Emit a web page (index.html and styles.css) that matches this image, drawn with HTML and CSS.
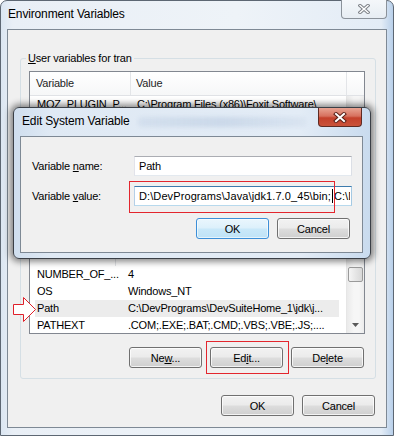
FILE: index.html
```html
<!DOCTYPE html>
<html lang="en">
<head>
    <meta charset="UTF-8">
    <meta name="viewport" content="width=device-width, initial-scale=1.0">
    <title>Environment Variables</title>
    <link rel="stylesheet" href="styles.css">
</head>
<body>
    <div class="window">
        <div class="caption">
            <span class="caption-text">Environment Variables</span>
            <span class="close-btn">
                <svg width="12" height="10" viewBox="0 0 12 10">
                    <path d="M2 1.5 L10 8.5 M10 1.5 L2 8.5" stroke="#7d8187" stroke-width="3.4" stroke-linecap="square"/>
                    <path d="M2 1.5 L10 8.5 M10 1.5 L2 8.5" stroke="#fff" stroke-width="1.4" stroke-linecap="square"/>
                </svg>
            </span>
        </div>

        <div class="client">
            <div class="group">
                <div class="group-label"><u>U</u>ser variables for tran</div>
                <div class="listview">
                    <div class="lv-head">
                        <span class="hcell">Variable</span>
                        <span class="hcell">Value</span>
                        <span class="hcell"></span>
                    </div>
                    <div class="lv-body">
                        <div class="lv-rows">
                            <div class="row user"><span>MOZ_PLUGIN_P...</span><span>C:\Program Files (x86)\Foxit Software\</span></div>
                            <!-- rows hidden behind the edit dialog -->
                            <div class="row user"></div>
                            <div class="row user"></div>
                            <div class="row user"></div>
                            <div class="row user"></div>
                            <div class="row user"></div>
                            <div class="row user"></div>
                            <div class="row user"></div>
                            <div class="row user"></div>
                            <div class="row seam"><span></span><span></span></div>
                            <div class="row sys"><span>NUMBER_OF_...</span><span>4</span></div>
                            <div class="row sys"><span>OS</span><span>Windows_NT</span></div>
                            <div class="row sys selected"><span>Path</span><span>C:\DevPrograms\DevSuiteHome_1\jdk\j...</span></div>
                            <div class="row sys"><span>PATHEXT</span><span>.COM;.EXE;.BAT;.CMD;.VBS;.VBE;.JS;....</span></div>
                        </div>
                        <div class="scrollbar">
                            <div class="thumb"></div>
                            <div class="arrow-down">
                                <svg width="7" height="4" viewBox="0 0 7 4"><path d="M0 0 H7 L3.5 4 Z" fill="#5a5a5a"/></svg>
                            </div>
                        </div>
                    </div>
                </div>
                <div class="btn-row">
                    <button class="btn">Ne<u>w</u>...</button>
                    <button class="btn marked">Ed<u>i</u>t...</button>
                    <button class="btn">De<u>l</u>ete</button>
                </div>
            </div>

            <div class="btn-row dialog-buttons">
                <button class="btn">OK</button>
                <button class="btn">Cancel</button>
            </div>
        </div>
    </div>

    <!-- red pointer to the Path row -->
    <svg class="pointer" width="25" height="27" viewBox="0 0 25 27">
        <path d="M1.5 8.5 H11.5 V1.5 L23.5 13.5 L11.5 25.5 V18.5 H1.5 Z" fill="#fff" stroke="#e0202a" stroke-width="1"/>
    </svg>

    <div class="dialog">
        <div class="caption dlg-caption">
            <span class="caption-text">Edit System Variable</span>
            <span class="ghost"></span>
            <span class="close-btn red">
                <svg width="14" height="11" viewBox="0 0 14 11">
                    <path d="M3 2 L11 9 M11 2 L3 9" stroke="#5b2118" stroke-width="4" stroke-linecap="square"/>
                    <path d="M3 2 L11 9 M11 2 L3 9" stroke="#fff" stroke-width="2" stroke-linecap="square"/>
                </svg>
            </span>
        </div>
        <div class="dlg-client">
            <div class="form-row">
                <label class="form-label">Variable <u>n</u>ame:</label>
                <div class="field">Path</div>
            </div>
            <div class="form-row">
                <label class="form-label">Variable <u>v</u>alue:</label>
                <div class="field focused">
                    <span class="field-text">D:\DevPrograms\Java\jdk1.7.0_45\bin;<span class="caret"></span>C:\D</span>
                </div>
            </div>
            <div class="btn-row dlg-buttons">
                <button class="btn default">OK</button>
                <button class="btn">Cancel</button>
            </div>
        </div>
    </div>
</body>
</html>
```

FILE: styles.css
```css
body {
    margin: 0;
    background: #fff;
    font-family: "Segoe UI", "Liberation Sans", Arial, sans-serif;
    font-size: 11px;
    letter-spacing: -0.2px;
    color: #000;
    position: relative;
    width: 394px;
    height: 436px;
    overflow: hidden;
}
.window {
    box-sizing: border-box;
    width: 394px;
    height: 436px;
    display: flex;
    flex-direction: column;
    padding: 0 6px 7px 6px;
    border: 1px solid #5d6773;
    border-radius: 7px 7px 0 0;
    background: linear-gradient(to right, #dbe6f2 0%, #e9eff6 3%, #eef3f8 60%, #e3ecf6 97%, #b9d0ea 100%);
}
.caption {
    height: 28px;
    display: flex;
    align-items: center;
    flex-shrink: 0;
}
.caption-text {
    font-size: 12px;
    letter-spacing: -0.15px;
    padding-left: 1px;
    padding-bottom: 2px;
    color: #000;
}
.close-btn {
    margin-left: auto;
    align-self: flex-start;
    margin-top: -1px;
    width: 46px;
    height: 19px;
    box-sizing: border-box;
    border: 1px solid #8b929a;
    border-top: none;
    border-radius: 0 0 4px 4px;
    background: linear-gradient(#f4f7fa, #e7edf3);
    display: flex;
    align-items: center;
    justify-content: center;
}
.client {
    flex: 1;
    box-sizing: border-box;
    background: #f0f0f0;
    border: 1px solid #7e8995;
    display: flex;
    flex-direction: column;
}
.group {
    margin: 28px 10px 0 12px;
    border: 1px solid #d5dfe5;
    border-radius: 3px;
    padding: 0 10px 10px 8px;
}
.group-label {
    width: max-content;
    margin: -8px 0 5px -3px;
    padding: 0 2px;
    line-height: 15px;
    background: #f0f0f0;
}
.listview {
    height: 263px;
    box-sizing: border-box;
    border: 1px solid #828790;
    background: #fff;
    display: flex;
    flex-direction: column;
    overflow: hidden;
}
.lv-head {
    height: 24px;
    box-sizing: border-box;
    display: grid;
    grid-template-columns: 101px 216px 1fr;
    border-bottom: 1px solid #e0e2e6;
    background: linear-gradient(#ffffff, #f6f7f8);
}
.hcell {
    border-right: 1px solid #e3e5e8;
    line-height: 23px;
    padding-left: 6px;
    color: #1e1e1e;
}
.hcell:nth-child(2) {
    padding-left: 5px;
}
.hcell:last-child {
    border-right: none;
}
.lv-body {
    flex: 1;
    display: flex;
    min-height: 0;
}
.lv-rows {
    flex: 1;
    overflow: hidden;
}
.row {
    display: grid;
    height: 17px;
    line-height: 17px;
    margin: 0 7px 0 5px;
    white-space: nowrap;
}
.row span {
    padding-left: 2px;
    overflow: hidden;
}
.row.user {
    grid-template-columns: 100px 1fr;
}
.row.sys {
    grid-template-columns: 91px 1fr;
}
.row.seam {
    grid-template-columns: 86px 1fr;
    margin-left: 0;
}
.row.seam span:first-child {
    border-right: 1px solid #e3e5e8;
}
.row.selected {
    background: #ececec;
}
.scrollbar {
    width: 17px;
    border-left: 1px solid #e6e6e6;
    background: linear-gradient(to right, #eaeaea, #f6f6f6 40%, #f6f6f6 70%, #ececec);
    display: flex;
    flex-direction: column;
}
.thumb {
    margin: 171px 1px 0 1px;
    height: 15px;
    box-sizing: border-box;
    border: 1px solid #9a9a9a;
    border-radius: 2px;
    background: linear-gradient(to right, #f5f5f5, #e6e6e6 50%, #d8d8d8);
}
.arrow-down {
    margin-top: auto;
    height: 17px;
    display: flex;
    align-items: center;
    justify-content: center;
}
.btn-row {
    display: flex;
    justify-content: flex-end;
    gap: 8px;
    margin-top: 13px;
    padding-right: 1px;
}
.btn {
    box-sizing: border-box;
    width: 73px;
    height: 21px;
    padding: 0;
    border: 1px solid #707070;
    border-radius: 3px;
    background: linear-gradient(#f2f2f2 0%, #ebebeb 48%, #dddddd 52%, #cfcfcf 100%);
    box-shadow: inset 0 0 0 1px rgba(255, 255, 255, 0.75);
    font: inherit;
    letter-spacing: inherit;
    color: #000;
    position: relative;
}
.btn.marked::after {
    content: "";
    position: absolute;
    left: -5px;
    top: -7px;
    right: -7px;
    bottom: -7px;
    border: 1px solid #e3262e;
}
.btn.default {
    border-color: #3c8fd8;
    background: linear-gradient(#eaf6fd 0%, #dcf0fb 48%, #c9e8f9 52%, #bfe3f7 100%);
    box-shadow: inset 0 0 0 1px rgba(255, 255, 255, 0.6);
}
.dialog-buttons {
    margin-top: 16px;
    padding-right: 11px;
}
.pointer {
    position: absolute;
    left: 12px;
    top: 296px;
}
.dialog {
    position: absolute;
    left: 13px;
    top: 107px;
    width: 358px;
    height: 152px;
    box-sizing: border-box;
    padding: 0 7px 5px 6px;
    border: 1px solid #3a3f46;
    border-radius: 6px;
    background: linear-gradient(to right, #cfdeee, #dfe9f4 10%, #e3ecf6 80%, #c9dbee);
    box-shadow: 0 0 6px 3px rgba(0, 0, 0, 0.45);
    display: flex;
    flex-direction: column;
}
.dlg-caption {
    height: 28px;
}
.dlg-caption .caption-text {
    padding-left: 2px;
}
.ghost {
    flex: 1;
    align-self: stretch;
    margin: 9px 12px 9px 8px;
    border-radius: 4px;
    background: linear-gradient(to right, rgba(120, 150, 190, 0.12), rgba(120, 150, 190, 0.22) 50%, rgba(120, 150, 190, 0.08));
    filter: blur(2px);
}
.close-btn.red {
    margin-left: 0;
    margin-top: 0;
    margin-right: 1px;
    width: 44px;
    flex-shrink: 0;
    border-color: #5e2a22;
    background: linear-gradient(#e8a493 0%, #d7705e 45%, #c4402b 55%, #c9533a 100%);
}
.dlg-client {
    flex: 1;
    box-sizing: border-box;
    background: #f0f0f0;
    border: 1px solid #7e8995;
    padding: 19px 10px 0 11px;
    display: flex;
    flex-direction: column;
}
.form-row {
    display: flex;
    align-items: center;
    height: 20px;
    margin-bottom: 10px;
}
.form-label {
    width: 102px;
    flex-shrink: 0;
}
.field {
    flex: 1;
    min-width: 0;
    height: 20px;
    box-sizing: border-box;
    border: 1px solid;
    border-color: #abadb3 #dbdfe6 #e3e9ef #e2e3ea;
    background: #fff;
    padding-left: 4px;
    line-height: 18px;
    white-space: nowrap;
    overflow: hidden;
    position: relative;
}
.field.focused {
    border-color: #3d7bad #a4c9e3 #b7d9ed #b5cfe7;
    overflow: visible;
}
.field.focused::after {
    content: "";
    position: absolute;
    left: -6px;
    top: -6px;
    width: 204px;
    height: 30px;
    border: 1px solid #e3262e;
}
.field-text {
    display: block;
    overflow: hidden;
    margin-right: 1px;
    letter-spacing: 0.1px;
}
.caret {
    display: inline-block;
    width: 1px;
    height: 14px;
    margin: 0 1px;
    background: #000;
    vertical-align: -3px;
}
.dlg-buttons {
    margin-top: 2px;
    padding-right: 2px;
}
```
